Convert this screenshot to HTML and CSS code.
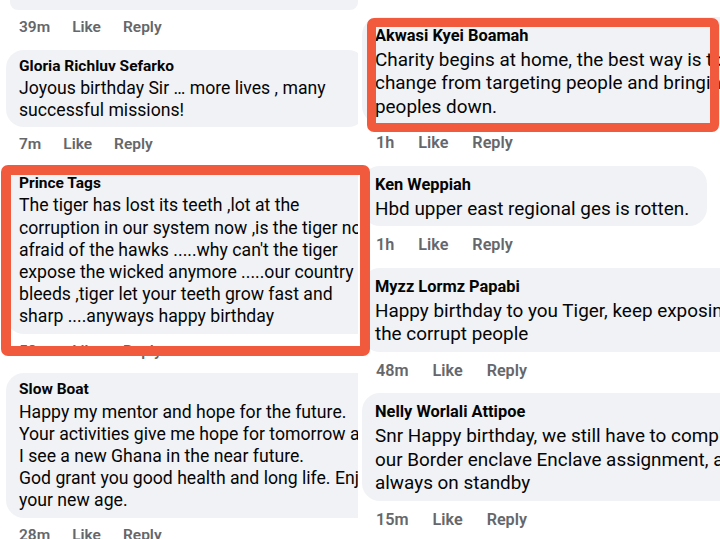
FILE: index.html
```html
<!DOCTYPE html>
<html lang="en">
<head>
    <meta charset="UTF-8">
    <meta name="viewport" content="width=device-width, initial-scale=1.0">
    <title>Birthday comments</title>
    <link rel="stylesheet" href="styles.css">
</head>
<body>
    <div class="collage">
        <!-- left screenshot -->
        <div class="panel panel-left">
            <div class="bubble-stub"></div>
            <div class="meta"><span>39m</span><span>Like</span><span>Reply</span></div>

            <div class="comment">
                <div class="bubble">
                    <div class="name">Gloria Richluv Sefarko</div>
                    <div class="text">Joyous birthday Sir … more lives , many<br>successful missions!</div>
                </div>
                <div class="meta"><span>7m</span><span>Like</span><span>Reply</span></div>
            </div>

            <div class="comment">
                <div class="bubble">
                    <div class="name">Prince Tags</div>
                    <div class="text">The tiger has lost its teeth ,lot at the<br>corruption in our system now ,is the tiger not<br>afraid of the hawks .....why can't the tiger<br>expose the wicked anymore .....our country<br>bleeds ,tiger let your teeth grow fast and<br>sharp ....anyways happy birthday</div>
                </div>
                <div class="meta"><span>58m</span><span>Like</span><span>Reply</span></div>
            </div>

            <div class="comment">
                <div class="bubble">
                    <div class="name">Slow Boat</div>
                    <div class="text">Happy my mentor and hope for the future.<br>Your activities give me hope for tomorrow and<br>I see a new Ghana in the near future.<br>God grant you good health and long life. Enjoy<br>your new age.</div>
                </div>
                <div class="meta"><span>28m</span><span>Like</span><span>Reply</span></div>
            </div>
        </div>

        <!-- right screenshot -->
        <div class="panel panel-right">
            <div class="comment">
                <div class="bubble">
                    <div class="name">Akwasi Kyei Boamah</div>
                    <div class="text">Charity begins at home, the best way is to<br>change from targeting people and bringing<br>peoples down.</div>
                </div>
                <div class="meta"><span>1h</span><span>Like</span><span>Reply</span></div>
            </div>

            <div class="comment">
                <div class="bubble">
                    <div class="name">Ken Weppiah</div>
                    <div class="text">Hbd upper east regional ges is rotten.</div>
                </div>
                <div class="meta"><span>1h</span><span>Like</span><span>Reply</span></div>
            </div>

            <div class="comment">
                <div class="bubble">
                    <div class="name">Myzz Lormz Papabi</div>
                    <div class="text">Happy birthday to you Tiger, keep exposing<br>the corrupt people</div>
                </div>
                <div class="meta"><span>48m</span><span>Like</span><span>Reply</span></div>
            </div>

            <div class="comment">
                <div class="bubble">
                    <div class="name">Nelly Worlali Attipoe</div>
                    <div class="text">Snr Happy birthday, we still have to complete<br>our Border enclave Enclave assignment, and<br>always on standby</div>
                </div>
                <div class="meta"><span>15m</span><span>Like</span><span>Reply</span></div>
            </div>
        </div>

        <!-- red highlight boxes drawn over the screenshots -->
        <div class="highlight highlight-left"></div>
        <div class="highlight highlight-right"></div>
    </div>
</body>
</html>
```

FILE: styles.css
```css
html, body {
    margin: 0;
    padding: 0;
    background: #ffffff;
}
body {
    font-family: Roboto, "Noto Sans", Arial, sans-serif;
    color: #050505;
    overflow: hidden;
}
.collage {
    position: relative;
    display: flex;
    gap: 2px;
    width: 720px;
    height: 539px;
    overflow: hidden;
}
.panel {
    overflow: hidden;
    height: 539px;
}
.panel-left {
    width: 358px;
    flex: none;
}
.panel-right {
    flex: 1;
    padding-top: 16.5px;
}
.bubble-stub {
    height: 10px;
    margin-left: 10px;
    background: #f0f2f5;
    border-radius: 0 0 8px 8px;
}
.bubble {
    display: inline-block;
    white-space: nowrap;
    background: #f0f2f5;
    border-radius: 18px;
    padding: 6px 40px 6px 13px;
}
.panel-left .bubble {
    margin-left: 6px;
}
.panel-right .bubble {
    margin-left: 2px;
    padding: 7px 18px 6px 13px;
}
.name {
    font-weight: 700;
    font-size: 15.5px;
    line-height: 21.5px;
}
.text {
    font-size: 17.65px;
    line-height: 22.2px;
}
.panel-right .name {
    font-size: 16.4px;
    line-height: 24px;
}
.panel-right .text {
    font-size: 18.9px;
    line-height: 23.5px;
}
.meta {
    display: flex;
    gap: 22px;
    padding-left: 19px;
    margin: 6px 0 11.5px;
    font-size: 15.5px;
    line-height: 22px;
    font-weight: 600;
    color: #65676b;
}
.panel-right .meta {
    gap: 24px;
    padding-left: 16px;
    margin: 7px 0 11.5px;
    font-size: 16.2px;
    line-height: 23px;
}
.highlight {
    position: absolute;
    box-sizing: border-box;
    border: 10px solid #f25a3e;
    border-radius: 7px;
}
.highlight-left {
    left: 1px;
    top: 165px;
    width: 369px;
    height: 191px;
}
.highlight-right {
    left: 367px;
    top: 18px;
    width: 352px;
    height: 114px;
    border-width: 9px;
}
```
